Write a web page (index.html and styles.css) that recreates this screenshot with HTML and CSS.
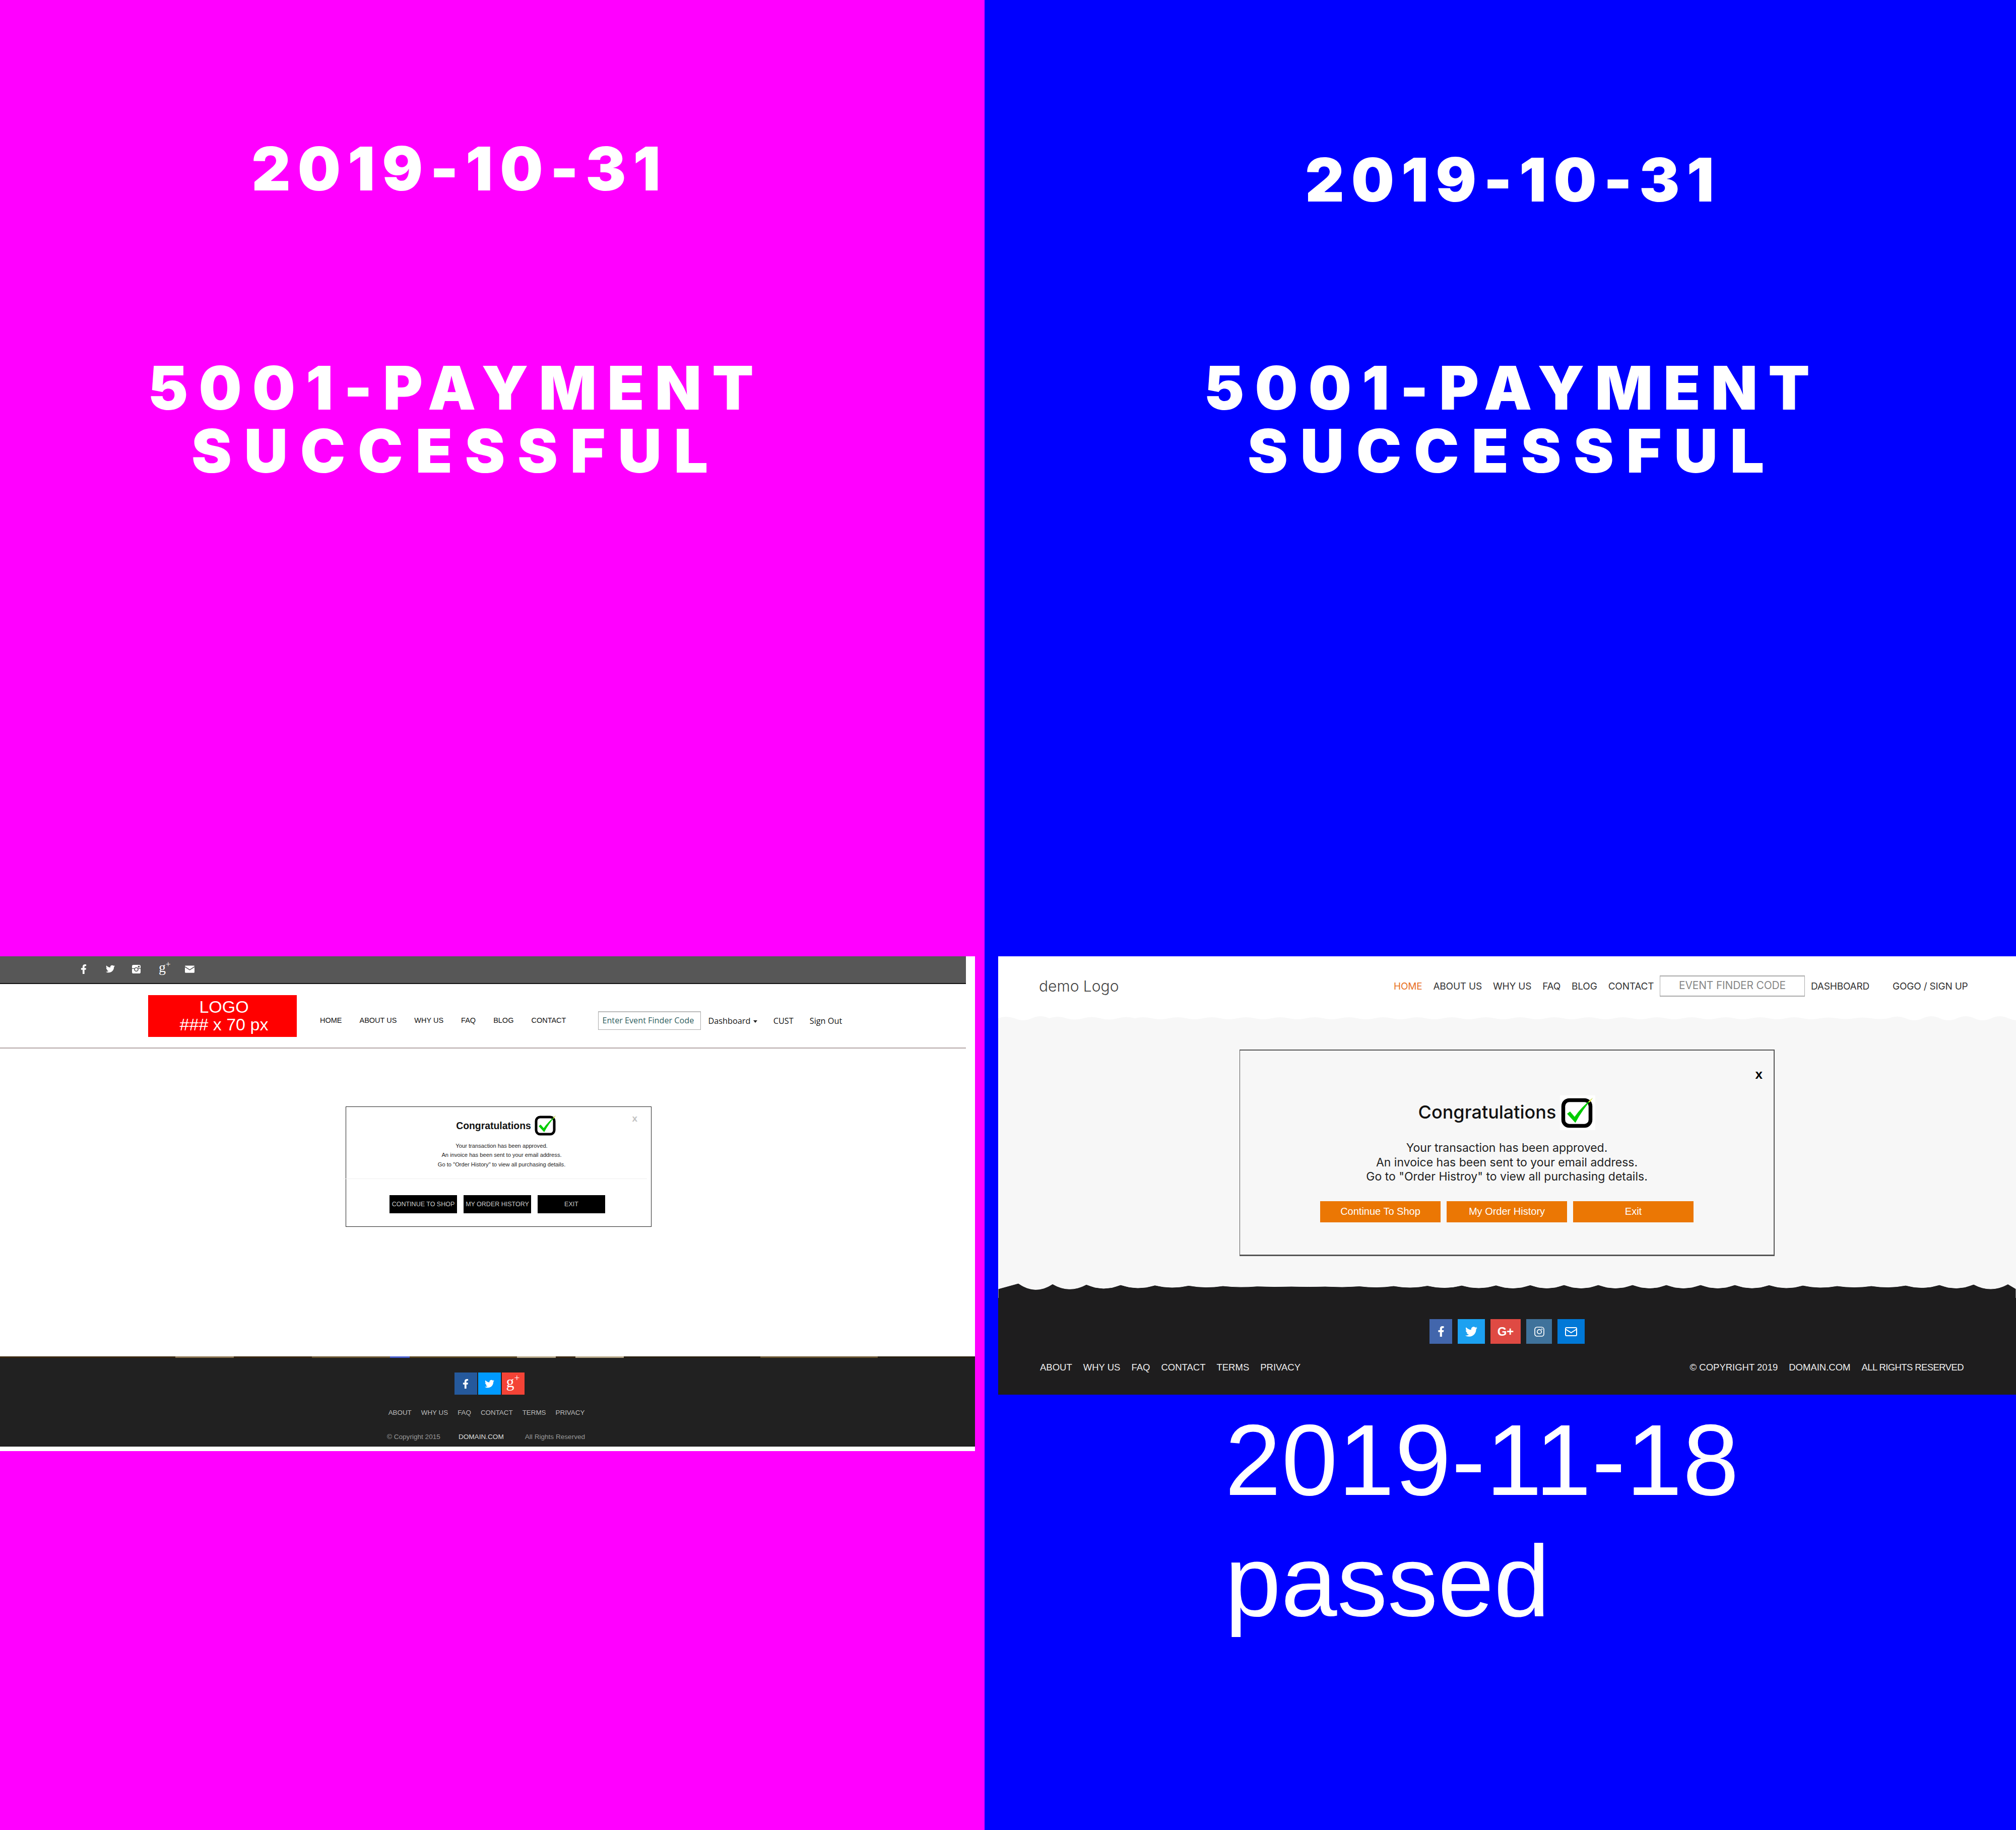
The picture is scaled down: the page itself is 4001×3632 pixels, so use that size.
FILE: index.html
```html
<!DOCTYPE html>
<html lang="en">
<head>
  <meta charset="UTF-8" />
  <title>5001 Payment Successful</title>
  <link rel="stylesheet" href="styles.css">
</head>
<body>
  <svg class="defs" width="0" height="0">
    <symbol id="i-f" viewBox="0 0 320 512"><path d="M279.14 288l14.22-92.66h-88.91v-60.13c0-25.35 12.42-50.06 52.24-50.06h40.42V6.26S260.43 0 225.36 0c-73.22 0-121.08 44.38-121.08 124.72v70.62H22.89V288h81.39v224h100.17V288z"/></symbol>
    <symbol id="i-t" viewBox="0 0 512 512"><path d="M459.37 151.716c.325 4.548.325 9.097.325 13.645 0 138.72-105.583 298.558-298.558 298.558-59.452 0-114.68-17.219-161.137-47.106 8.447.974 16.568 1.299 25.34 1.299 49.055 0 94.213-16.568 130.274-44.832-46.132-.975-84.792-31.188-98.112-72.772 6.498.974 12.995 1.624 19.818 1.624 9.421 0 18.843-1.3 27.614-3.573-48.081-9.747-84.143-51.98-84.143-102.985v-1.299c13.969 7.797 30.214 12.67 47.431 13.319-28.264-18.843-46.781-51.005-46.781-87.391 0-19.492 5.197-37.36 14.294-52.954 51.655 63.675 129.3 105.258 216.365 109.807-1.624-7.797-2.599-15.918-2.599-24.04 0-57.828 46.782-104.934 104.934-104.934 30.213 0 57.502 12.67 76.67 33.137 23.715-4.548 46.456-13.32 66.599-25.34-7.798 24.366-24.366 44.833-46.132 57.827 21.117-2.273 41.584-8.122 60.426-16.243-14.292 20.791-32.161 39.308-52.628 54.253z"/></symbol>
    <symbol id="i-check" viewBox="0 0 44 40">
      <rect x="3" y="3" width="36" height="34" rx="8" fill="none" stroke="#000" stroke-width="5"/>
      <path d="M8 21 L12 18 L18 25 Q27 12 42 0 Q28 16 19 33 Z" fill="#00cc00"/>
      <path d="M36 5 L42 0 L38 6 Z" fill="#e8e040"/>
    </symbol>
  </svg>

  <div class="page">
    <!-- left: 2019-10-31 -->
    <section class="col col-old">
      <div class="titles titles-old">
        <h1 class="date">2019-10-31</h1>
        <h1 class="name">5001-PAYMENT<br><span class="wide">SUCCESSFUL</span></h1>
      </div>

      <div class="shot-old">
        <div class="topbar">
          <svg class="tb-f"><use href="#i-f"/></svg>
          <svg class="tb-t"><use href="#i-t"/></svg>
          <svg class="tb-i" viewBox="0 0 18 18"><rect width="18" height="18" rx="3" fill="#fff"/><rect x="0" y="7" width="18" height="1.4" fill="#575757"/><circle cx="9" cy="9.5" r="4.6" fill="#575757"/><circle cx="9" cy="9.5" r="2.8" fill="#fff"/><rect x="12.5" y="2" width="3.5" height="3.5" fill="#575757"/></svg>
          <span class="tb-g">g<sup>+</sup></span>
          <svg class="tb-m" viewBox="0 0 20 15"><rect width="20" height="15" rx="1.5" fill="#fff"/><path d="M0 2.5 L10 9 L20 2.5" fill="none" stroke="#575757" stroke-width="1.6"/></svg>
        </div>

        <div class="old-head">
          <div class="old-logo">LOGO<br>### x 70 px</div>
          <nav class="old-nav">
            <a>HOME</a><a>ABOUT US</a><a>WHY US</a><a>FAQ</a><a>BLOG</a><a>CONTACT</a>
          </nav>
          <div class="old-finder">Enter Event Finder Code</div>
          <div class="old-links">
            <a class="dash">Dashboard <i class="caret"></i></a><a>CUST</a><a>Sign Out</a>
          </div>
        </div>

        <main class="old-main">
          <div class="old-modal">
            <span class="old-close">x</span>
            <div class="old-heading">
              <h3>Congratulations</h3>
              <svg class="old-check"><use href="#i-check"/></svg>
            </div>
            <p class="old-text">Your transaction has been approved.<br>An invoice has been sent to your email address.<br>Go to "Order History" to view all purchasing details.</p>
            <hr class="old-rule">
            <div class="old-btns">
              <button>CONTINUE TO SHOP</button>
              <button>MY ORDER HISTORY</button>
              <button>EXIT</button>
            </div>
          </div>
        </main>

        <footer class="old-foot">
          <div class="old-social">
            <a class="s-fb"><svg class="ic-f"><use href="#i-f"/></svg></a>
            <a class="s-tw"><svg class="ic-t"><use href="#i-t"/></svg></a>
            <a class="s-gp"><span>g<sup>+</sup></span></a>
          </div>
          <div class="old-foot-links">
            <a>ABOUT</a><a>WHY US</a><a>FAQ</a><a>CONTACT</a><a>TERMS</a><a>PRIVACY</a>
          </div>
          <div class="old-copy">
            <span>© Copyright 2015</span><span class="domain">DOMAIN.COM</span><span>All Rights Reserved</span>
          </div>
        </footer>
      </div>
    </section>

    <!-- right: 2019-11-18 -->
    <section class="col col-new">
      <div class="titles titles-new">
        <h1 class="date">2019-10-31</h1>
        <h1 class="name">5001-PAYMENT<br><span class="wide">SUCCESSFUL</span></h1>
      </div>

      <div class="shot-new">
        <header class="new-head">
          <div class="new-logo">demo Logo</div>
          <nav class="new-nav">
            <a class="on">HOME</a><a>ABOUT US</a><a>WHY US</a><a>FAQ</a><a>BLOG</a><a>CONTACT</a>
          </nav>
          <div class="new-finder">EVENT FINDER CODE</div>
          <a class="new-dash">DASHBOARD</a>
          <a class="new-sign">GOGO / SIGN UP</a>
        </header>
        <svg class="head-wave" viewBox="0 0 2020 16" preserveAspectRatio="none">
          <path fill="#f7f7f7" d="M0 5 q14 -6 33 0 q17 8 34 0 t34 0 q17 -6 34 0 q17 5 34 0 t34 0 t34 0 t34 0 q17 -4 34 0 t34 0 t34 0 t34 0 t34 0 t34 0 t34 0 t34 0 t34 0 t34 0 t34 0 t34 0 t34 0 t34 0 t34 0 t34 0 t34 0 t34 0 t34 0 t34 0 t34 0 t34 0 t34 0 t34 0 t34 0 t34 0 t34 0 t34 0 t34 0 t34 0 t34 0 t34 0 t34 0 t34 0 t34 0 t34 0 t34 0 t34 0 t34 0 t34 0 q17 -3 34 0 t34 0 t34 0 t34 0 q17 -7 34 0 q17 8 34 0 t34 0 t34 0 t34 0 t34 0 t34 0 t34 0 L2073 16 L0 16 Z"/>
        </svg>

        <main class="new-main">
          <div class="new-modal">
            <span class="new-close">x</span>
            <div class="new-heading">
              <h3>Congratulations</h3>
              <span class="new-check"><svg><use href="#i-check"/></svg></span>
            </div>
            <p class="new-text">Your transaction has been approved.<br>An invoice has been sent to your email address.<br>Go to "Order Histroy" to view all purchasing details.</p>
            <div class="new-btns">
              <button>Continue To Shop</button>
              <button>My Order History</button>
              <button>Exit</button>
            </div>
          </div>
        </main>

        <svg class="foot-wave" viewBox="0 0 2020 30" preserveAspectRatio="none">
          <path fill="#1e1d1e" stroke="#fff" stroke-width="1" d="M0 12 L40 1 Q74 25 108 2.3 Q141 21.8 175 3.3 Q209 18.4 243 4 Q277 15.7 311 4.7 Q345 13 378 5.3 Q412 11.4 446 6 Q480 9.7 514 6.7 Q548 8.2 582 7 Q615 8 649 7 Q683 9.3 717 6.5 Q751 10.8 785 6 Q818 12.3 852 5.5 Q886 13.8 920 5 Q954 15.2 988 4.7 Q1022 16.5 1056 4.3 Q1089 16.9 1123 4 Q1157 17 1191 4 Q1225 17 1259 4 Q1293 17 1326 4 Q1360 17 1394 4 Q1428 17 1462 4 Q1496 16.4 1530 4.3 Q1564 15.4 1597 5 Q1631 12.5 1665 6 Q1699 11 1733 6 Q1767 11.5 1801 5 Q1835 14.5 1868 4 Q1902 17.5 1936 3 Q1970 21.3 2004 2.5 L2020 12 L2020 31 L0 31 Z"/>
        </svg>
        <footer class="new-foot">
          <div class="new-social">
            <a class="n-fb"><svg class="ic-f"><use href="#i-f"/></svg></a>
            <a class="n-tw"><svg class="ic-t"><use href="#i-t"/></svg></a>
            <a class="n-gp">G+</a>
            <a class="n-ig"><svg viewBox="0 0 20 20" fill="none" stroke="#fff" stroke-width="1.7"><rect x="1" y="1" width="18" height="18" rx="4.5"/><circle cx="10" cy="10" r="4.2"/><circle cx="15" cy="5" r=".5"/></svg></a>
            <a class="n-ml"><svg viewBox="0 0 24 18" fill="none" stroke="#fff" stroke-width="2"><rect x="1" y="1" width="22" height="16" rx="2"/><path d="M1 4 L12 11 L23 4"/></svg></a>
          </div>
          <div class="new-foot-row">
            <div class="new-foot-links"><a>ABOUT</a><a>WHY US</a><a>FAQ</a><a>CONTACT</a><a>TERMS</a><a>PRIVACY</a></div>
            <div class="new-foot-links"><a>© COPYRIGHT 2019</a><a>DOMAIN.COM</a><a class="narrow">ALL RIGHTS RESERVED</a></div>
          </div>
        </footer>
      </div>

      <p class="passed"><span class="passed-date">2019-11-18</span><br>passed</p>
    </section>
  </div>
</body>
</html>
```

FILE: styles.css
```css
* {
  box-sizing: border-box;
}

body {
  margin: 0;
  font-family: "Liberation Sans", Arial, sans-serif;
}

.defs {
  position: absolute;
}

h1, h3, p {
  margin: 0;
}

a {
  white-space: nowrap;
}

.page {
  display: flex;
  width: 4001px;
  height: 3632px;
  overflow: hidden;
}

.col-old {
  width: 1954px;
  background: #ff00ff;
}

.col-new {
  width: 2047px;
  background: #0000ff;
}

/* titles */
.titles {
  height: 1898px;
  color: #fff;
  font-family: Inter, sans-serif;
  font-weight: 900;
  font-size: 120px;
  line-height: 125px;
  letter-spacing: 0.175em;
  text-align: center;
}

.titles h1 {
  font: inherit;
}

.titles .wide {
  letter-spacing: 0.205em;
}

.titles .date {
  letter-spacing: 0.116em;
  padding-left: 14px;
}

.titles-old {
  width: 1810px;
  padding-top: 272px;
}

.titles-old .date {
  margin-bottom: 310px;
}

.titles-new {
  width: 2094px;
  padding-top: 294px;
}

.titles-new .date {
  margin-bottom: 288px;
  padding-left: 4px;
}

/* left shot */
.shot-old {
  width: 1935px;
  height: 982px;
  background: #fff;
}

.topbar {
  width: 1917px;
  height: 55px;
  display: flex;
  align-items: center;
  background: #575757;
  border-bottom: 2px solid #111;
  padding: 0 0 3px 160px;
  color: #fff;
  fill: #fff;
}

.tb-f { width: 12px; height: 19px; margin-right: 38px; }
.tb-t { width: 18px; height: 18px; margin-right: 34px; }
.tb-i { width: 17px; height: 17px; margin-right: 36px; }
.tb-g {
  width: 18px;
  margin-right: 34px;
  font-family: "Liberation Serif", serif;
  font-size: 28px;
  line-height: 18px;
  padding-bottom: 6px;
}
.tb-g sup, .s-gp sup {
  font-size: 0.6em;
  line-height: 0;
}
.tb-m { width: 19px; height: 15px; }

.old-head {
  width: 1917px;
  height: 128px;
  display: flex;
  padding: 22px 0 0 294px;
  border-bottom: 2px solid #b5a8a8;
  color: #111;
}

.old-logo {
  width: 295px;
  height: 83px;
  padding: 6px 0 0 6px;
  background: #ff0000;
  color: #fff;
  font-size: 34px;
  line-height: 35px;
  text-align: center;
}

.old-nav {
  display: flex;
  gap: 35px;
  margin: 42px 0 0 46px;
  font-size: 14.5px;
  line-height: 17px;
}

.old-finder {
  width: 204px;
  height: 37px;
  margin: 32px 0 0 64px;
  padding-left: 7px;
  border: 1px solid #aaa;
  border-top: 2px solid #bbb;
  font-family: "Open Sans", sans-serif;
  font-size: 16.2px;
  line-height: 32px;
  color: #2f6060;
  white-space: nowrap;
}

.old-links {
  display: flex;
  gap: 32px;
  margin: 41px 0 0 14px;
  font-family: "Open Sans", sans-serif;
  font-size: 16.3px;
  line-height: 20px;
}

.caret {
  display: inline-block;
  width: 0;
  height: 0;
  margin-left: 1px;
  vertical-align: middle;
  border-left: 4px solid transparent;
  border-right: 4px solid transparent;
  border-top: 5px solid #222;
}

.old-main {
  height: 611px;
  padding: 115px 0 0 686px;
}

.old-modal {
  position: relative;
  width: 607px;
  height: 239px;
  padding-top: 17px;
  border: 1px solid #222;
}

.old-close {
  position: absolute;
  top: 13px;
  right: 27px;
  color: #c2c2c2;
  font-size: 19px;
  font-weight: 700;
  line-height: 20px;
}

.old-heading {
  display: flex;
  justify-content: center;
  align-items: center;
  gap: 7px;
  padding-left: 31px;
  height: 40px;
}

.old-heading h3 {
  font-size: 19.4px;
  font-weight: 700;
  color: #111;
}

.old-check {
  width: 44px;
  height: 40px;
}

.old-text {
  margin-top: 11px;
  padding-left: 12px;
  text-align: center;
  font-size: 11.2px;
  line-height: 18.3px;
  color: #222;
}

.old-rule {
  width: 603px;
  height: 1px;
  margin: 19px 0 0 -6px;
  border: 0;
  background: #eee;
}

.old-btns {
  display: flex;
  justify-content: center;
  gap: 13px;
  margin-top: 32px;
  padding-right: 5px;
}

.old-btns button {
  width: 134px;
  height: 36px;
  padding: 0;
  border: 0;
  background: #000;
  color: #ccc;
  font: 12.5px "Liberation Sans", Arial, sans-serif;
}

.old-foot {
  height: 179px;
  background: linear-gradient(90deg, #3a2810 0 18%, #8a7350 18% 24%, #3a2810 24% 32%, #6a5530 32% 40%, #4a60d0 40% 42%, #5a4520 42% 53%, #b8a888 53% 57%, #3a2810 57% 59%, #b8a888 59% 64%, #2a2010 64% 78%, #6a5530 78% 90%, #2a2010 90% 100%) top / 100% 3px no-repeat, #212121;
  padding-top: 32px;
  border-bottom: 1px solid #111;
}

.old-social {
  display: flex;
  justify-content: center;
  gap: 2px;
  padding-left: 7px;
}

.old-social a {
  width: 45px;
  height: 44px;
  display: flex;
  align-items: center;
  justify-content: center;
  fill: #fff;
  color: #fff;
}

.s-fb { background: #25599c; }
.s-tw { background: #009aff; }
.s-gp { background: #f44336; font: 32px/1 "Liberation Serif", serif; padding-bottom: 8px; }
.ic-f { width: 12px; height: 19px; }
.ic-t { width: 19px; height: 19px; }

.old-foot-links {
  display: flex;
  justify-content: center;
  gap: 19px;
  margin-top: 28px;
  padding-right: 4px;
  color: #bdbdbd;
  font-size: 13.4px;
  line-height: 16px;
}

.old-copy {
  display: flex;
  justify-content: center;
  gap: 36px;
  margin-top: 32px;
  padding-right: 6px;
  color: #999;
  font-size: 13.6px;
  line-height: 16px;
}

.old-copy .domain {
  margin-right: 6px;
  color: #ddd;
}

/* right shot */
.shot-new {
  width: 2020px;
  margin-left: 27px;
  height: 870px;
  background: #f7f7f7;
}

.new-head {
  height: 118px;
  display: flex;
  align-items: center;
  padding: 0 0 0 81px;
  background: #fff;
  color: #333;
  font-family: Inter, sans-serif;
  font-size: 19px;
  letter-spacing: -0.2px;
}

.new-logo {
  width: 704px;
  font-size: 30px;
  font-weight: 300;
  letter-spacing: 0;
  color: #444;
}

.new-nav {
  display: flex;
  gap: 22px;
  width: 528px;
}

.new-nav .on {
  color: #e8701f;
}

.new-finder {
  width: 288px;
  height: 42px;
  border: 1px solid #aaa;
  border-width: 2px 1px;
  text-align: center;
  line-height: 36px;
  font-size: 21px;
  color: #888;
}

.new-dash {
  margin-left: 12px;
  width: 162px;
}

.head-wave {
  display: block;
  width: 2020px;
  height: 16px;
  background: #fff;
}

.new-main {
  height: 514px;
  padding: 51px 0 0 479px;
}

.new-modal {
  position: relative;
  width: 1062px;
  height: 410px;
  padding-top: 89px;
  border: 1px solid #555;
  border-width: 2px 2px 3px 1px;
}

.new-close {
  position: absolute;
  top: 34px;
  right: 22px;
  font-size: 26px;
  font-weight: 700;
  line-height: 26px;
  color: #000;
}

.new-heading {
  display: flex;
  justify-content: center;
  align-items: center;
  gap: 8px;
  font-family: Inter, sans-serif;
}

.new-heading h3 {
  font-size: 36px;
  font-weight: 500;
  color: #111;
  padding-bottom: 3px;
}

.new-check {
  display: flex;
  align-items: center;
  justify-content: center;
  width: 70px;
  height: 69px;
  background: #fff;
}

.new-check svg {
  width: 66px;
  height: 60px;
}

.new-text {
  margin-top: 21px;
  text-align: center;
  font-family: Inter, sans-serif;
  font-size: 23px;
  line-height: 28.5px;
  color: #222;
}

.new-btns {
  display: flex;
  justify-content: center;
  gap: 12px;
  margin-top: 34px;
}

.new-btns button {
  width: 239px;
  height: 42px;
  padding: 0;
  border: 0;
  background: #eb7704;
  color: #fff;
  font: 20px "Liberation Sans", Arial, sans-serif;
}

.foot-wave {
  display: block;
  width: 2020px;
  height: 30px;
  margin-bottom: -1px;
}

.new-foot {
  height: 193px;
  background: #1e1d1e;
  padding-top: 43px;
  color: #eee;
  font-size: 18.5px;
}

.new-social {
  display: flex;
  justify-content: center;
  gap: 11px;
}

.new-social a {
  height: 49px;
  display: flex;
  align-items: center;
  justify-content: center;
  fill: #fff;
  color: #fff;
}

.new-social .ic-f { width: 14px; height: 21px; }
.new-social .ic-t { width: 24px; height: 24px; }

.n-fb { width: 45px; background: #4266ac; }
.n-tw { width: 54px; background: #1ca1f1; }
.n-gp { width: 60px; background: #df4a43; font-size: 24px; font-weight: 700; }
.n-ig { width: 51px; background: #3f729b; }
.n-ig svg { width: 20px; height: 20px; }
.n-ml { width: 54px; background: #0078d7; }
.n-ml svg { width: 24px; height: 18px; }

.new-foot-row {
  display: flex;
  justify-content: space-between;
  padding: 36px 104px 0 83px;
}

.new-foot-links {
  display: flex;
  gap: 22px;
  line-height: 22px;
}

.narrow {
  letter-spacing: -0.6px;
}

.passed {
  margin: 10px 0 0 477px;
  color: #fff;
  font-size: 200px;
  line-height: 240px;
}

.passed-date {
  letter-spacing: 1.3px;
}
```
